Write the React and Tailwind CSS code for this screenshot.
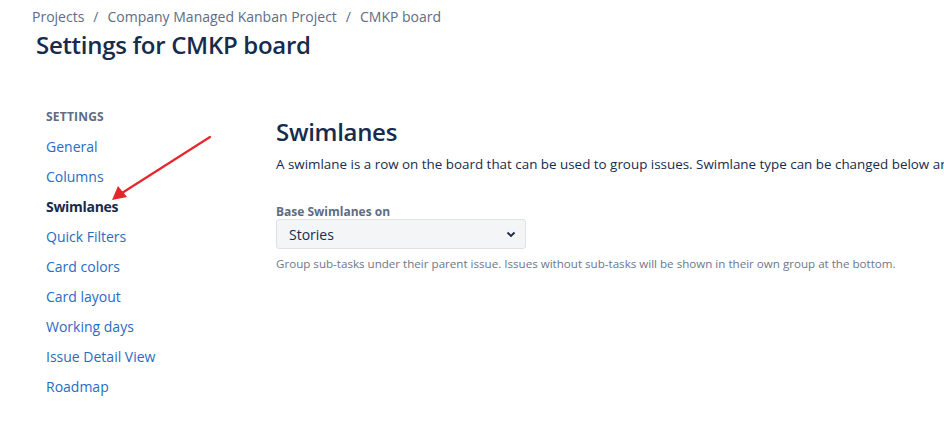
import React from 'react';

const items = [
  'General',
  'Columns',
  'Swimlanes',
  'Quick Filters',
  'Card colors',
  'Card layout',
  'Working days',
  'Issue Detail View',
  'Roadmap',
];

const App = () => {
  return (
    <div
      className="relative w-[944px] h-[434px] bg-white overflow-hidden"
      style={{ fontFamily: '"Open Sans", "Noto Sans", sans-serif' }}
    >
      {/* Header */}
      <div className="pl-[32px] pt-[6px]">
        <div className="flex items-center text-[14px] leading-[22px] text-[#5e6c84]">
          <span>Projects</span>
          <span className="mx-[9px]">/</span>
          <span>Company Managed Kanban Project</span>
          <span className="mx-[9px]">/</span>
          <span>CMKP board</span>
        </div>
        <h1 className="pl-[4px] mt-[1px] text-[24px] leading-[32px] font-semibold tracking-[-0.3px] text-[#172b4d]">
          Settings for CMKP board
        </h1>
      </div>

      <div className="flex mt-[46px]">
        {/* Sidebar */}
        <nav className="w-[230px] shrink-0 pl-[46px] pt-[2px]">
          <div className="text-[12px] leading-[16px] font-bold text-[#5e6c84] tracking-[0.2px]">
            SETTINGS
          </div>
          <ul className="mt-[6px]">
            {items.map((item) => (
              <li
                key={item}
                className={
                  item === 'Swimlanes'
                    ? 'h-[30px] flex items-center whitespace-nowrap text-[14px] font-bold tracking-[-0.3px] text-[#172b4d]'
                    : 'h-[30px] flex items-center whitespace-nowrap text-[14px] text-[#2a6bc2]'
                }
              >
                {item}
              </li>
            ))}
          </ul>
        </nav>

        {/* Content */}
        <main className="flex-1 pl-[46px] pt-[9px] whitespace-nowrap">
          <h2 className="text-[24px] leading-[32px] font-semibold tracking-[-0.3px] text-[#172b4d]">Swimlanes</h2>
          <p className="mt-[6px] text-[13.4px] leading-[20px] text-[#172b4d]">
            A swimlane is a row on the board that can be used to group issues. Swimlane type can be changed below and saved automatically.
          </p>
          <div className="mt-[30px] text-[12px] leading-[15px] font-bold text-[#5e6c84]">
            Base Swimlanes on
          </div>
          <div className="w-[250px] h-[30px] flex items-center justify-between px-[12px] bg-[#f4f5f7] border border-[#dfe1e6] rounded-[3px] text-[14px] text-[#172b4d]">
            <span>Stories</span>
            <svg width="10" height="10" viewBox="0 0 10 10" className="mr-[-3px]">
              <path d="M1.5 3.5 L5 7 L8.5 3.5" fill="none" stroke="#172b4d" strokeWidth="1.8" />
            </svg>
          </div>
          <p className="mt-[7px] text-[11.6px] leading-[16px] text-[#6b778c]">
            Group sub-tasks under their parent issue. Issues without sub-tasks will be shown in their own group at the bottom.
          </p>
        </main>
      </div>

      {/* Annotation arrow */}
      <svg className="absolute left-0 top-0 pointer-events-none" width="944" height="434">
        <line x1="210" y1="137" x2="122" y2="193" stroke="#e5262b" strokeWidth="2.2" strokeLinecap="round" />
        <polygon points="112,200 118,186 127,197" fill="#e5262b" />
      </svg>
    </div>
  );
};

export default App;
